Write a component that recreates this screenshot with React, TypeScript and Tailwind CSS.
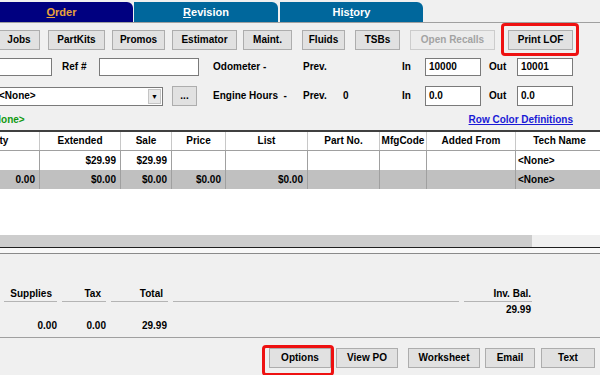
const btn =
  "h-[20px] shrink-0 flex items-center justify-center bg-[#e1e1e1] border border-[#adadad] box-border";
const input = "h-[18px] shrink-0 bg-white border border-[#7a7a7a] box-border flex items-center pl-[3px]";

const Tab = ({ children, className }: { children: React.ReactNode; className: string }) => (
  <div className={`h-[20px] shrink-0 rounded-tr-[6px] flex items-center justify-center text-[11px] ${className}`}>
    {children}
  </div>
);

const cols = [
  { label: "Qty", w: "-ml-[39px] w-[79px]" },
  { label: "Extended", w: "w-[81px]" },
  { label: "Sale", w: "w-[51px]" },
  { label: "Price", w: "w-[54px]" },
  { label: "List", w: "w-[82px]" },
  { label: "Part No.", w: "w-[72px]" },
  { label: "MfgCode", w: "w-[47px]" },
  { label: "Added From", w: "w-[89px]" },
  { label: "Tech Name", w: "w-[88px]" },
];

const row1 = ["", "$29.99", "$29.99", "", "", "", "", "", "<None>"];
const row2 = ["0.00", "$0.00", "$0.00", "$0.00", "$0.00", "", "", "", "<None>"];

const Row = ({ cells, className }: { cells: string[]; className: string }) => (
  <div className={`flex h-[19px] ${className}`}>
    {cols.map((c, i) => (
      <div
        key={c.label}
        className={`${c.w} shrink-0 h-full border-r border-[#a0a0a0] flex items-center ${
          i === 8 ? "justify-start pl-[2px]" : "justify-end pr-[4px]"
        }`}
      >
        {cells[i]}
      </div>
    ))}
  </div>
);

const head = "h-[17px] pt-[4px] border-b border-[#b4b4b4] box-border text-right";

export default function App() {
  return (
    <div className="relative w-[600px] h-[375px] overflow-hidden bg-[#f0f0f0] font-['Liberation_Sans',Arial,sans-serif] text-[10px] font-bold text-black leading-none">
      {/* tabs */}
      <div className="flex h-[23px] pt-[2px] border-b border-[#a0a0a0] box-border">
        <Tab className="-ml-[10px] w-[143px] bg-[#000080] text-[#e8a33a]">
          <span>
            <span className="underline">O</span>rder
          </span>
        </Tab>
        <Tab className="ml-[1px] w-[144px] bg-[#00679c] text-white">
          <span>
            <span className="underline">R</span>evision
          </span>
        </Tab>
        <Tab className="ml-[2px] w-[143px] bg-[#00679c] text-white">
          <span>
            His<span className="underline">t</span>ory
          </span>
        </Tab>
      </div>

      {/* toolbar */}
      <div className="flex mt-[7px]">
        <div className={`${btn} -ml-[2px] w-[42px]`}>Jobs</div>
        <div className={`${btn} ml-[8px] w-[57px]`}>PartKits</div>
        <div className={`${btn} ml-[7px] w-[53px]`}>Promos</div>
        <div className={`${btn} ml-[7px] w-[65px]`}>Estimator</div>
        <div className={`${btn} ml-[6px] w-[49px]`}>Maint.</div>
        <div className={`${btn} ml-[10px] w-[43px]`}>Fluids</div>
        <div className={`${btn} ml-[10px] w-[45px]`}>TSBs</div>
        <div className={`${btn} ml-[10px] w-[85px] bg-[#ececec] border-[#cccccc] text-[#a3a3a3]`}>Open Recalls</div>
        <div className={`${btn} ml-[13px] w-[65px]`}>Print LOF</div>
      </div>

      {/* odometer row */}
      <div className="flex items-center mt-[8px] h-[18px]">
        <div className={`${input} -ml-[2px] w-[54px]`} />
        <span className="ml-[10px] w-[37px] shrink-0">Ref #</span>
        <div className={`${input} w-[100px]`} />
        <span className="ml-[14px] w-[90px] shrink-0">Odometer -</span>
        <span className="w-[99px] shrink-0">Prev.</span>
        <span className="w-[23px] shrink-0">In</span>
        <div className={`${input} w-[56px]`}>10000</div>
        <span className="w-[36px] shrink-0 pl-[8px]">Out</span>
        <div className={`${input} w-[56px]`}>10001</div>
      </div>

      {/* engine hours row */}
      <div className="flex items-center mt-[10px] h-[20px]">
        <div className="-ml-[3px] w-[166px] h-[19px] shrink-0 bg-white border border-[#7a7a7a] box-border flex items-center justify-between">
          <span className="pl-[1px]">&lt;None&gt;</span>
          <span className="w-[13px] h-[15px] mr-[1px] bg-[#e8e8e8] border border-[#c4c4c4] flex items-center justify-center text-[7px]">
            ▼
          </span>
        </div>
        <div className={`${btn} ml-[9px] w-[25px]`}>...</div>
        <span className="ml-[16px] w-[90px] shrink-0">Engine Hours&nbsp; -</span>
        <span className="w-[40px] shrink-0">Prev.</span>
        <span className="w-[59px] shrink-0">0</span>
        <span className="w-[23px] shrink-0">In</span>
        <div className={`${input} w-[56px] h-[20px]`}>0.0</div>
        <span className="w-[36px] shrink-0 pl-[8px]">Out</span>
        <div className={`${input} w-[56px] h-[20px]`}>0.0</div>
      </div>

      {/* legend row */}
      <div className="flex items-center justify-between mt-[7px] h-[14px]">
        <span className="-ml-[12px] text-[#119911]">&lt;None&gt;</span>
        <span className="mr-[27px] text-[#1a1ad6] underline">Row Color Definitions</span>
      </div>

      {/* grid */}
      <div className="mt-[3px] border-t-2 border-[#404040]">
        <div className="flex h-[19px] bg-white border-b border-[#a0a0a0] box-border">
          {cols.map((c) => (
            <div key={c.label} className={`${c.w} shrink-0 h-full border-r border-[#c8c8c8] flex items-center justify-center`}>
              {c.label}
            </div>
          ))}
        </div>
        <Row cells={row1} className="bg-white" />
        <Row cells={row2} className="bg-[#c0c0c0]" />
        <div className="h-[46px] bg-white" />
        <div className="flex h-[13px] border-b border-[#202020]">
          <div className="w-[532px] bg-[#cdcdcd]" />
          <div className="flex-1 bg-[#f0f0f0]" />
        </div>
        <div className="h-[6px] bg-[#f8f8f8] border-b border-[#8a8a8a]" />
      </div>

      {/* totals */}
      <div className="h-[84px] pt-[31px] border-b border-[#a0a0a0] box-border">
        <div className="flex">
          <div className="ml-[4px] w-[53px]">
            <div className={`${head} pr-[5px]`}>Supplies</div>
            <div className="mt-[19px] text-right">0.00</div>
          </div>
          <div className="ml-[5px] w-[44px]">
            <div className={`${head} pr-[5px]`}>Tax</div>
            <div className="mt-[19px] text-right">0.00</div>
          </div>
          <div className="ml-[5px] w-[57px]">
            <div className={`${head} pr-[5px]`}>Total</div>
            <div className="mt-[19px] pr-[1px] text-right">29.99</div>
          </div>
          <div className="ml-[5px] w-[286px] h-[17px] border-b border-[#b4b4b4] box-border" />
          <div className="ml-[5px] w-[68px]">
            <div className={`${head} pr-[1px]`}>Inv. Bal.</div>
            <div className="mt-[3px] pr-[1px] text-right">29.99</div>
          </div>
        </div>
      </div>

      {/* bottom buttons */}
      <div className="flex mt-[10px]">
        <div className={`${btn} ml-[269px] w-[62px]`}>Options</div>
        <div className={`${btn} ml-[5px] w-[62px]`}>View PO</div>
        <div className={`${btn} ml-[10px] w-[72px]`}>Worksheet</div>
        <div className={`${btn} ml-[5px] w-[50px]`}>Email</div>
        <div className={`${btn} ml-[6px] w-[54px]`}>Text</div>
      </div>

      {/* red highlight annotations */}
      <div className="absolute left-[501px] top-[23px] w-[78px] h-[33px] border-[3px] border-[#ee1111] rounded-[4px]" />
      <div className="absolute left-[262px] top-[345px] w-[72px] h-[31px] border-[3px] border-[#ee1111] rounded-[4px]" />
    </div>
  );
}
